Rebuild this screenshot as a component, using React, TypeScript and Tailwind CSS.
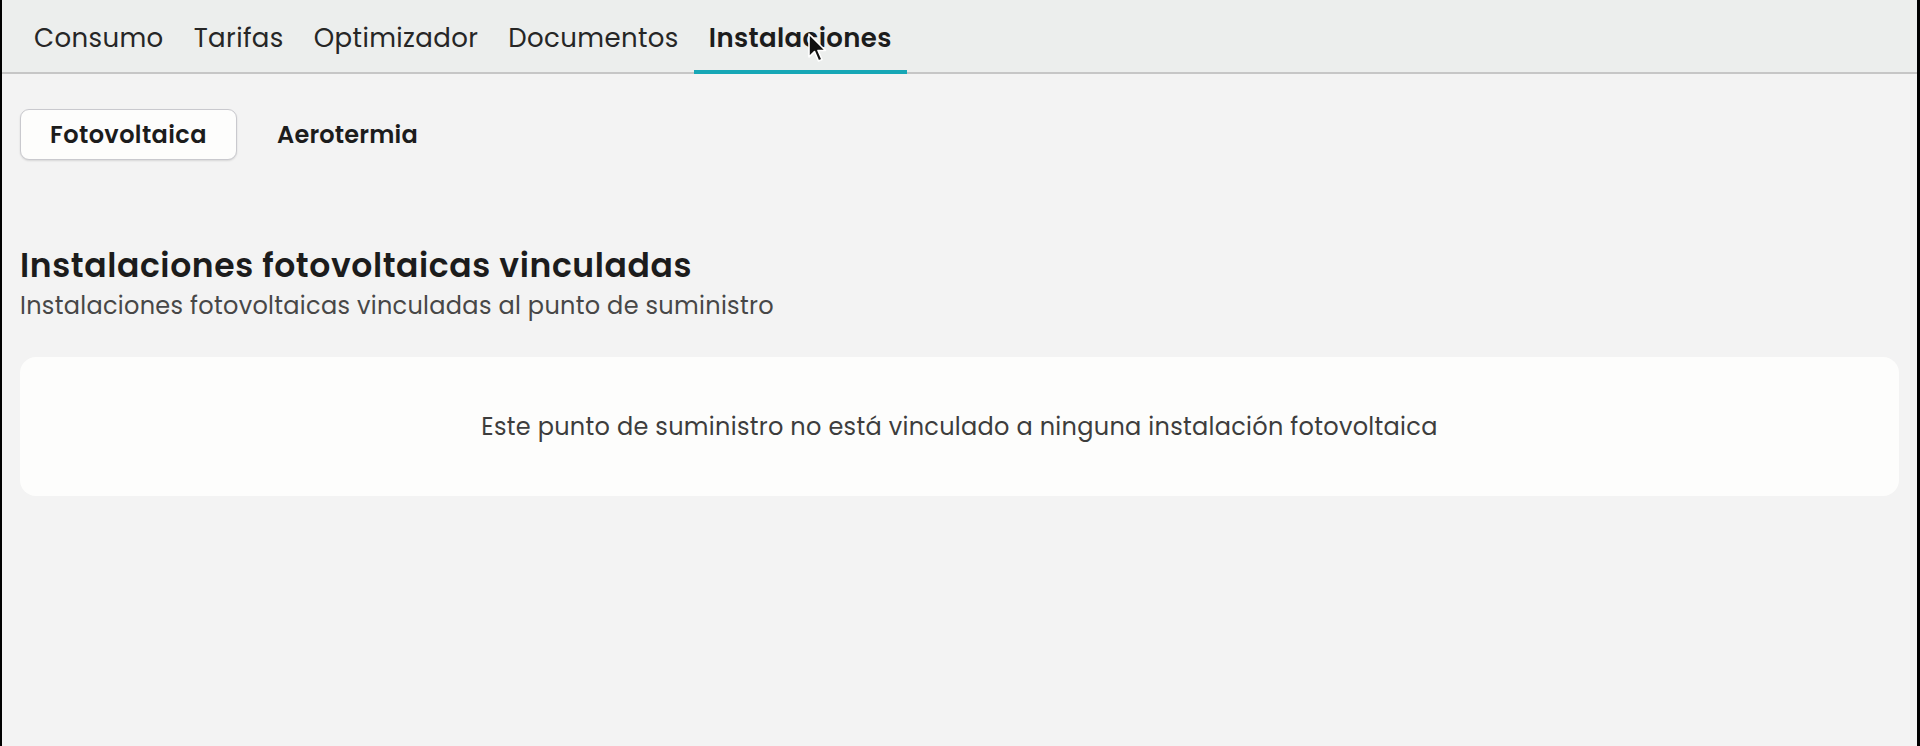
const tabs = ["Consumo", "Tarifas", "Optimizador", "Documentos", "Instalaciones"];

function Cursor() {
  return (
    <svg
      className="absolute left-[805px] top-[33px]"
      width="22"
      height="32"
      viewBox="0 0 22 32"
    >
      <path
        d="M2 1 L2 24 L7.5 18.5 L11.5 28 L15 26.5 L11 17.5 L18.5 17.5 Z"
        fill="#111"
        stroke="#fff"
        strokeWidth="1.6"
        strokeLinejoin="round"
      />
    </svg>
  );
}

export default function App() {
  const active = "Instalaciones";
  return (
    <div
      className="relative min-h-[746px] bg-[#f3f3f3] border-l-2 border-r-[3px] border-black text-[#1e1e1e]"
      style={{ fontFamily: "Poppins, Inter, 'Noto Sans', sans-serif" }}
    >
      {/* Top navigation */}
      <nav className="flex h-[74px] items-stretch bg-[#eceeed] border-b-2 border-[#c6c6c6] pl-[17px]">
        {tabs.map((t) => (
          <div
            key={t}
            className={
              "relative flex items-center px-[15px] pt-[4px] text-[26px] tracking-[0.38px] " +
              (t === active ? "font-semibold text-[#1c1c1c]" : "text-[#262626]")
            }
          >
            {t}
            {t === active && (
              <span className="absolute left-0 right-0 -bottom-[2px] h-[4px] bg-[#17a7b6]" />
            )}
          </div>
        ))}
      </nav>

      <main className="pl-[18px] pr-[18px]">
        {/* Installation type switcher */}
        <div className="flex items-center gap-[40px] pt-[35px]">
          <button className="h-[51px] w-[217px] rounded-[9px] border-[1.5px] border-[#c9c9ce] bg-[#fdfdfc] shadow-[0_1px_2px_rgba(0,0,0,0.12)] text-[24px] tracking-[0.4px] font-semibold text-[#1c1c1c]">
            Fotovoltaica
          </button>
          <button className="text-[24px] tracking-[0.2px] font-semibold text-[#1c1c1c]">
            Aerotermia
          </button>
        </div>

        <h2 className="mt-[84px] text-[33px] tracking-[0.6px] font-semibold leading-[44px] text-[#1c1c1c]">
          Instalaciones fotovoltaicas vinculadas
        </h2>
        <p className="mt-[2px] text-[24px] tracking-[0.3px] leading-[32px] text-[#474747]">
          Instalaciones fotovoltaicas vinculadas al punto de suministro
        </p>

        <div className="mt-[35px] flex h-[139px] items-center justify-center rounded-[16px] bg-[#fdfdfc]">
          <span className="text-[24px] tracking-[0.3px] text-[#3d3d3d]">
            Este punto de suministro no está vinculado a ninguna instalación fotovoltaica
          </span>
        </div>
      </main>

      <Cursor />
    </div>
  );
}
